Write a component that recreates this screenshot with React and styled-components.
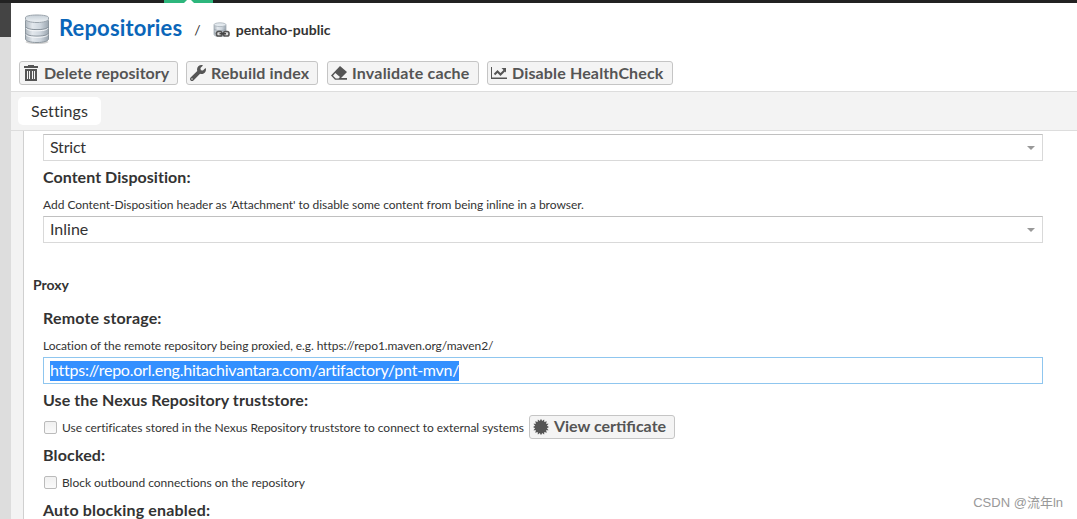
import styled, { createGlobalStyle } from "styled-components";
import { FaWrench } from "react-icons/fa";

const GlobalStyle = createGlobalStyle`
  * {
    box-sizing: border-box;
  }
  body {
    margin: 0;
    overflow: hidden;
    background: #fff;
    color: #333;
    font-family: Lato, "Noto Sans CJK SC", sans-serif;
    font-size: 16px;
    font-variant-ligatures: none;
  }
`;

const DatabaseIcon = () => (
  <svg width="28" height="31" viewBox="0 0 28 31">
    <defs>
      <linearGradient id="disk" x1="0" x2="1" y1="0" y2="0">
        <stop offset="0" stopColor="#aeb7bf" />
        <stop offset="0.3" stopColor="#e3e8ed" />
        <stop offset="0.65" stopColor="#cdd5dd" />
        <stop offset="1" stopColor="#9aa5af" />
      </linearGradient>
      <linearGradient id="diskTop" x1="0" x2="0" y1="0" y2="1">
        <stop offset="0" stopColor="#c6cfd7" />
        <stop offset="1" stopColor="#eef2f5" />
      </linearGradient>
    </defs>
    <ellipse cx="14" cy="29" rx="11.5" ry="2" fill="#000" opacity="0.18" />
    <path d="M2.5 7.5V26c0 2 5 3.500 11.500 3.500S25.500 28 25.500 26V7.500z" fill="url(#disk)" stroke="#8d979f" />
    <path d="M3 14c1 1.800 5.500 2.600 11 2.600s10-.8 11-2.600M3 20.500c1 1.800 5.500 2.600 11 2.600s10-.8 11-2.600" fill="none" stroke="#87919a" />
    <path d="M3 15.200c1 1.800 5.500 2.600 11 2.600s10-.8 11-2.600M3 21.700c1 1.800 5.500 2.600 11 2.600s10-.8 11-2.600" fill="none" stroke="#f6f8fa" />
    <path d="M2.500 7V5.500c0-1.500 5-2.500 11.500-2.500s11.500 1 11.500 2.500V7c0 2-5 3.500-11.500 3.500S2.500 9 2.500 7z" transform="translate(0 -1)" fill="url(#diskTop)" stroke="#9aa3ab" />
  </svg>
);

const ProxyRepoIcon = () => (
  <svg width="17" height="17" viewBox="0 0 17 17">
    <path d="M1 3v9.500c0 1.200 2.500 2 6 2s6-.8 6-2V3z" fill="url(#disk)" stroke="#a4adb5" strokeWidth="0.800" />
    <path d="M1 7c1 1 3 1.500 6 1.500s5-.5 6-1.500M1 10.500c1 1 3 1.500 6 1.500" fill="none" stroke="#98a2ab" strokeWidth="0.800" />
    <ellipse cx="7" cy="2.700" rx="6" ry="1.900" fill="#e3e9ee" stroke="#a9b2ba" strokeWidth="0.800" />
    <g fill="#ddd" stroke="#555" strokeWidth="1.600">
      <rect x="3.500" y="9.500" width="5.500" height="4.500" rx="1.800" />
      <rect x="10.500" y="9.500" width="5.500" height="4.500" rx="1.800" />
    </g>
    <path d="M6.500 11.700h6.500" stroke="#444" strokeWidth="1.600" />
  </svg>
);

const TrashIcon = () => (
  <svg width="16" height="16" viewBox="0 0 16 16" fill="#555">
    <path d="M5 0h6v1h4v2H1V1h4z" />
    <path fillRule="evenodd" d="M2 4h12v12H2zM4 6v8h1V6zM6 6v8h1V6zM9 6v8h1V6zM11 6v8h1V6z" />
  </svg>
);

const EraserIcon = () => (
  <svg width="16" height="16" viewBox="0 0 16 16">
    <path d="M9 1l7 6-6 6h6v1.700H4L0 10.500z" fill="#555" />
    <path d="M4.300 8l4.700 4-1.500 1.500H4.800L2 10.700z" fill="#f4f4f4" />
  </svg>
);

const ChartIcon = () => (
  <svg width="16" height="12" viewBox="0 0 16 12">
    <path d="M0 0h1v10.500h15V12H0z" fill="#555" />
    <path d="M3.500 7.500l3-3 3 3 4-4" fill="none" stroke="#555" strokeWidth="2" />
    <path d="M10.500 1H15v4.500z" fill="#555" />
  </svg>
);

// 16 point starburst
const burst = Array.from({ length: 32 }, (_, i) => {
  const r = i % 2 ? 6 : 8.2;
  const a = (i * Math.PI) / 16;
  return `${(8 + r * Math.sin(a)).toFixed(2)},${(8 - r * Math.cos(a)).toFixed(2)}`;
}).join(" ");

const CertificateIcon = () => (
  <svg width="16" height="16" viewBox="0 0 16 16">
    <polygon points={burst} fill="#555" />
  </svg>
);

function App() {
  return (
    <Page>
      <GlobalStyle />
      <TopBar>
        <ActiveMode>
          <svg width="10" height="3" viewBox="0 0 10 3">
            <path d="M0 3l3-3h4l3 3z" fill="#fff" />
          </svg>
        </ActiveMode>
      </TopBar>
      <Body>
        <SideMenu />
        <Main>
          <Breadcrumb>
            <DatabaseIcon />
            <Title>Repositories</Title>
            <Slash>/</Slash>
            <ProxyRepoIcon />
            <RepoName>pentaho-public</RepoName>
          </Breadcrumb>
          <Toolbar>
            <Button $width={159} $track={0.05}>
              <TrashIcon />
              <span>Delete repository</span>
            </Button>
            <Button $width={132} $track={0.15}>
              <FaWrench size={16} color="#555" />
              <span>Rebuild index</span>
            </Button>
            <Button $width={152} $track={0.2}>
              <EraserIcon />
              <span>Invalidate cache</span>
            </Button>
            <Button $width={186} $track={0.15}>
              <ChartIcon />
              <span>Disable HealthCheck</span>
            </Button>
          </Toolbar>
          <TabStrip>
            <Tab>Settings</Tab>
          </TabStrip>
          <Panel>
            <Form>
              <SelectBox>
                <Value $track={-0.2}>Strict</Value>
                <Arrow />
              </SelectBox>
              <Label $track={0.05}>Content Disposition:</Label>
              <Help $track={-0.03}>
                Add Content-Disposition header as 'Attachment' to disable some content from being inline in a browser.
              </Help>
              <SelectBox>
                <Value>Inline</Value>
                <Arrow />
              </SelectBox>
              <Section>Proxy</Section>
              <Label $track={0.17}>Remote storage:</Label>
              <Help $track={-0.07}>
                Location of the remote repository being proxied, e.g. https://repo1.maven.org/maven2/
              </Help>
              <UrlField>
                <Selected>https://repo.orl.eng.hitachivantara.com/artifactory/pnt-mvn/</Selected>
              </UrlField>
              <Label $track={0.08}>Use the Nexus Repository truststore:</Label>
              <CheckRow>
                <Checkbox />
                <CheckText $track={-0.04}>
                  Use certificates stored in the Nexus Repository truststore to connect to external systems
                </CheckText>
                <Button $width={146}>
                  <CertificateIcon />
                  <span>View certificate</span>
                </Button>
              </CheckRow>
              <Label $track={0.15}>Blocked:</Label>
              <CheckRow>
                <Checkbox />
                <CheckText $track={-0.03}>Block outbound connections on the repository</CheckText>
              </CheckRow>
              <Label $track={0.18}>Auto blocking enabled:</Label>
            </Form>
          </Panel>
        </Main>
      </Body>
      <Watermark>CSDN @流年ln</Watermark>
    </Page>
  );
}

const Page = styled.div`
  position: relative;
  display: flex;
  flex-direction: column;
  height: 519px;
  overflow: hidden;
`;

const TopBar = styled.header`
  flex: none;
  height: 3px;
  padding-left: 164px;
  background: #222;
`;

const ActiveMode = styled.div`
  display: flex;
  justify-content: center;
  width: 49px;
  height: 3px;
  background: #2db67c;
`;

const Body = styled.div`
  display: flex;
  flex: 1;
  min-height: 0;
`;

const SideMenu = styled.aside`
  flex: none;
  width: 11px;
  background: #ddd;
  border-top: 34px solid #444;
`;

const Main = styled.main`
  display: flex;
  flex: 1;
  flex-direction: column;
  min-width: 0;
`;

const Breadcrumb = styled.div`
  display: flex;
  flex: none;
  align-items: flex-start;
  height: 58px;
  padding: 10px 0 0 12px;

  & > svg {
    flex: none;
  }
  & > svg:nth-of-type(2) {
    margin: 9px 0 0 12px;
  }
`;

const Title = styled.h1`
  margin: 1px 0 0 8px;
  color: #0a66b9;
  font-size: 22px;
  letter-spacing: 0.15px;
  line-height: 28px;
`;

const Slash = styled.span`
  margin: 8px 0 0 12px;
  font-size: 14px;
  line-height: 18px;
`;

const RepoName = styled.span`
  margin: 8px 0 0 6px;
  font-size: 14px;
  font-weight: 700;
  letter-spacing: 0.05px;
  line-height: 18px;
`;

const Toolbar = styled.div`
  display: flex;
  flex: none;
  gap: 8px;
  height: 31px;
  padding-left: 8px;
  border-bottom: 1px solid #ddd;

  & > :nth-child(3) {
    margin-left: 1px;
  }
`;

const Button = styled.button`
  display: flex;
  flex: none;
  align-items: center;
  gap: 5px;
  width: ${(p) => p.$width}px;
  height: 24px;
  padding: 0 0 0 3px;
  color: #555;
  background: #f4f4f4;
  border: 1px solid #c5c5c5;
  border-radius: 3px;
  font: 700 16px Lato, sans-serif;
  letter-spacing: ${(p) => p.$track || 0}px;
  white-space: nowrap;

  & > svg {
    flex: none;
  }
  & > span {
    padding-bottom: 2px;
  }
`;

const TabStrip = styled.nav`
  flex: none;
  height: 39px;
  padding: 5px 0 0 7px;
  background: #f3f3f3;
  border-bottom: 1px solid #ddd;
`;

const Tab = styled.div`
  width: 83px;
  height: 28px;
  padding-left: 13px;
  background: #fff;
  border-radius: 5px;
  letter-spacing: 0.05px;
  line-height: 27px;
`;

const Panel = styled.section`
  flex: 1;
  min-height: 0;
  padding-left: 12px;
  background: #f3f3f3;
`;

const Form = styled.div`
  display: flex;
  flex-direction: column;
  height: 100%;
  padding: 3px 34px 0 19px;
  overflow: hidden;
  background: #fff;
  border-left: 1px solid #d0d0d0;
`;

const SelectBox = styled.div`
  display: flex;
  flex: none;
  align-items: center;
  justify-content: space-between;
  height: 27px;
  padding: 0 7px 0 6px;
  border: 1px solid #d9d9d9;
  border-top-color: #c0c0c0;
`;

const Value = styled.span`
  padding-bottom: 2px;
  letter-spacing: ${(p) => p.$track || 0}px;
`;

const Arrow = styled.i`
  border: 4px solid transparent;
  border-top-color: #999;
  border-bottom: 0;
`;

const Label = styled.div`
  flex: none;
  height: 34px;
  font-weight: 700;
  letter-spacing: ${(p) => p.$track}px;
  line-height: 32px;
`;

const Help = styled.div`
  flex: none;
  height: 21px;
  font-size: 12px;
  letter-spacing: ${(p) => p.$track}px;
  line-height: 20px;
  white-space: nowrap;
`;

const Section = styled.h2`
  flex: none;
  height: 34px;
  margin: 25px 0 0 -10px;
  font-size: 14px;
  line-height: 33px;
`;

const UrlField = styled.div`
  display: flex;
  flex: none;
  align-items: center;
  height: 27px;
  padding-left: 6px;
  border: 1px solid #8fc6ef;
`;

const Selected = styled.span`
  height: 20px;
  color: #fff;
  background: #3390ff;
  letter-spacing: -0.243px;
  line-height: 18px;
`;

const CheckRow = styled.div`
  display: flex;
  flex: none;
  align-items: center;
  height: 21px;
  padding-bottom: 2px;

  & > button {
    margin-bottom: 2px;
  }
`;

const Checkbox = styled.span`
  width: 13px;
  height: 13px;
  margin: 0 5px 0 1px;
  background: linear-gradient(#f0f0f0, #fafafa);
  border: 1px solid #bbb;
  border-radius: 2px;
`;

const CheckText = styled.span`
  margin-right: 5px;
  font-size: 12px;
  letter-spacing: ${(p) => p.$track}px;
  white-space: nowrap;
`;

const Watermark = styled.div`
  position: absolute;
  right: 14px;
  bottom: 6px;
  color: #999;
  font: 13px/20px "Liberation Sans", "Noto Sans CJK SC", sans-serif;
`;

export default App;
